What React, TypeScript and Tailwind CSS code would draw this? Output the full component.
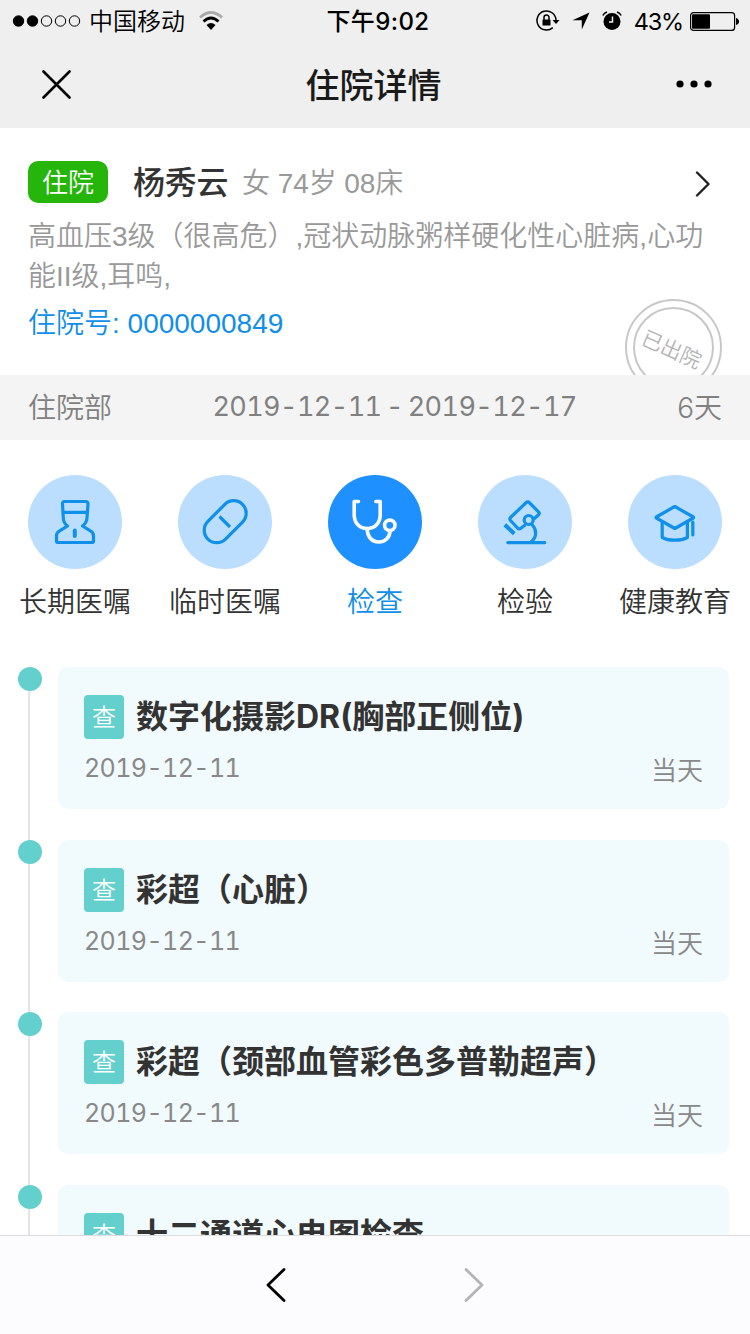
import React from 'react';

interface Exam {
  title: string;
  date?: string;
  day?: string;
}

interface Category {
  label: string;
  icon: React.ReactNode;
  active?: boolean;
}

const exams: Exam[] = [
  { title: '数字化摄影DR(胸部正侧位)', date: '2019-12-11', day: '当天' },
  { title: '彩超（心脏）', date: '2019-12-11', day: '当天' },
  { title: '彩超（颈部血管彩色多普勒超声）', date: '2019-12-11', day: '当天' },
  { title: '十二通道心电图检查' },
];

const iconProps = {
  viewBox: '0 0 94 94',
  className: 'w-full h-full',
  fill: 'none',
  stroke: 'currentColor',
  strokeWidth: 3.2,
  strokeLinecap: 'round' as const,
  strokeLinejoin: 'round' as const,
};

const DoctorIcon = () => (
  <svg {...iconProps}>
    <path d="M36.500 26.500h21q2.500 0 2.500 2.500l-1 14q-.4 5-4.500 8l7.500 4.700q3.500 1.800 3.500 5v5.300q0 1.500-1.500 1.500H30q-1.500 0-1.500-1.500v-5.300q0-3.200 3.500-5l7.500-4.700q-4-3-4.200-8L34.500 29q-.2-2.500 2-2.500z" />
    <path d="M35.500 37.300h23.500" />
    <path d="M46.800 55.500v5.500" strokeWidth={4} />
  </svg>
);

const PillIcon = () => (
  <svg {...iconProps}>
    <rect x="22.700" y="34.200" width="49" height="25" rx="12.500" transform="rotate(-45 47.200 46.700)" />
    <path d="M41.500 41.500l10.500 10.500" strokeLinecap="butt" />
  </svg>
);

const StethoscopeIcon = () => (
  <svg {...iconProps} strokeWidth={3.6}>
    <path d="M30.500 26.500h-4.300v13.500c0 8 5.500 13.500 13 13.500s13-5.500 13-13.500V26.500h-4.300" />
    <path d="M39.200 53.500c0 8 4.500 13.500 11.500 13.500 6.500 0 10.800-4.500 11.300-10.500" />
    <circle cx="61.800" cy="50.300" r="5.200" />
  </svg>
);

const MicroscopeIcon = () => (
  <svg {...iconProps}>
    <path d="M46.500 50.500L42.500 53.500Q41 54.500 39.500 53L32.500 45.500Q31.200 44 32.500 42.500L48.300 27.500Q49.700 26 51.200 27.500L60.500 36.800Q62 38.300 60.500 39.800L57 43" />
    <circle cx="50.700" cy="45" r="4.500" />
    <path d="M54 49.500c5.500 6 4.500 13-1 17.500M29.800 67.600h37" />
    <path d="M26.800 49.700l9.500 9" strokeWidth={4} strokeLinecap="butt" />
  </svg>
);

const CapIcon = () => (
  <svg {...iconProps}>
    <path d="M46.800 31.500l18.500 10.500q.6.500 0 1L46.800 53.500 28.300 43q-.6-.5 0-1z" />
    <path d="M34.200 48v14.500c6.500 3.600 18.700 3.600 25.200 0V48" />
    <path d="M64.800 47v13" />
  </svg>
);

const categories: Category[] = [
  { label: '长期医嘱', icon: <DoctorIcon /> },
  { label: '临时医嘱', icon: <PillIcon /> },
  { label: '检查', icon: <StethoscopeIcon />, active: true },
  { label: '检验', icon: <MicroscopeIcon /> },
  { label: '健康教育', icon: <CapIcon /> },
];

const StatusBar = () => (
  <div className="h-10 grid grid-cols-3 items-center text-black text-2xl leading-10 font-['Inter','Noto_Sans_CJK_SC',sans-serif]">
    <div className="flex items-center pl-3">
      <svg width="70" height="14" viewBox="0 0 70 14" stroke="#000" strokeWidth="1">
        <circle cx="6.500" cy="7" r="5.200" />
        <circle cx="20.500" cy="7" r="5.200" />
        <circle cx="34.500" cy="7" r="5.200" fill="none" />
        <circle cx="48.500" cy="7" r="5.200" fill="none" />
        <circle cx="62.500" cy="7" r="5.200" fill="none" />
      </svg>
      <span className="ml-[7px] pt-0.5 font-[350]">中国移动</span>
      <svg className="ml-3.5" width="24" height="20" viewBox="0 0 24 20" fill="none" strokeWidth="2.800">
        <path d="M1 6.500Q12-3.500 23 6.500" stroke="#aaa" />
        <path d="M4.500 10.500Q12 3.500 19.500 10.500" stroke="#000" />
        <path d="M7.500 14Q12 10.200 16.500 14L12 19z" fill="#000" />
      </svg>
    </div>
    <div className="text-center font-medium tracking-[0.4px] pl-1.5 pt-0.5">下午9:02</div>
    <div className="flex items-center justify-end pr-[11px]">
      <svg width="24" height="22" viewBox="0 0 24 22" fill="none" stroke="#000" strokeWidth="1.500">
        <path d="M16.800 17.600A9.500 9.500 0 1 1 20 10" />
        <path d="M16.500 10h7l-3.500 4z" fill="#000" stroke="none" />
        <rect x="6.500" y="9.500" width="8" height="6" rx="0.500" fill="#000" stroke="none" />
        <path d="M8 10V7.500a2.500 2.500 0 0 1 5 0V10" />
      </svg>
      <svg className="ml-3" width="18" height="18" viewBox="0 0 18 18">
        <path d="M17.500.5L9.800 17.500V8.300H.5z" />
      </svg>
      <svg className="ml-3" width="20" height="20" viewBox="0 0 20 20">
        <circle cx="10" cy="10.500" r="8.500" />
        <path d="M10.500 5.500v5.500H7" stroke="#efefef" strokeWidth="1.500" fill="none" />
        <path d="M.8 4.500Q2 2 5 1M19.200 4.500Q18 2 15 1" stroke="#000" strokeWidth="1.500" fill="none" />
      </svg>
      <span className="ml-3 pt-0.5 font-normal text-[23.500px] tracking-[-1.200px]">43%</span>
      <svg className="ml-[7px]" width="49" height="19" viewBox="0 0 49 19">
        <rect x="0.600" y="0.600" width="44" height="17.800" rx="3" fill="none" stroke="#000" strokeWidth="1.200" />
        <rect x="2" y="2.200" width="18" height="14.600" rx="1" />
        <path d="M46 6q3 1 3 3.500T46 13z" />
      </svg>
    </div>
  </div>
);

const NavBar = () => (
  <div className="h-[88px] flex items-center justify-between pl-[42px] pr-[37px]">
    <svg width="29" height="29" viewBox="0 0 29 29" stroke="#000" strokeWidth="2.600" strokeLinecap="round">
      <path d="M1.500 1.500l26 26M27.500 1.500l-26 26" />
    </svg>
    <h1 className="pt-[3px] text-[34px] leading-[50px] font-medium text-[#1a1a1a]">住院详情</h1>
    <svg width="37" height="8" viewBox="0 0 37 8">
      <circle cx="4" cy="4" r="3.600" />
      <circle cx="18" cy="4" r="3.600" />
      <circle cx="32" cy="4" r="3.600" />
    </svg>
  </div>
);

const PatientInfo = () => (
  <section className="relative h-[247px] overflow-hidden bg-white px-7 pt-[33px]">
    <div className="flex items-center h-[42px]">
      <span className="w-20 h-[42px] rounded-[10px] bg-[#26b50a] text-white text-[26px] leading-[45px] text-center">住院</span>
      <span className="ml-[25px] text-[32px] leading-[42px] pt-0.5 font-medium text-[#333] tracking-[-0.3px]">杨秀云</span>
      <span className="ml-3.5 text-[28px] leading-[42px] pt-[3px] text-[#999] tracking-[-0.1px]">女 74岁 08床</span>
      <svg className="ml-auto mr-[11px] mt-[3px]" width="17" height="26" viewBox="0 0 17 26" fill="none" stroke="#222" strokeWidth="2.400" strokeLinecap="round" strokeLinejoin="round">
        <path d="M3 1.500L14.500 13 3 24.500" />
      </svg>
    </div>
    <p className="mt-3.5 text-[28px] leading-10 text-[#999]">高血压3级（很高危）,冠状动脉粥样硬化性心脏病,心功能II级,耳鸣,</p>
    <p className="mt-[7px] text-[28px] leading-10 text-[#108ee9]">住院号: 0000000849</p>
    <div className="absolute left-[625px] top-[171px] w-[97px] h-[97px] rounded-full border-2 border-[#c8c8c8] p-1.5">
      <div className="w-full h-full rounded-full border-2 border-[#c8c8c8] flex items-center justify-center">
        <span className="rotate-[24deg] -translate-x-0.5 translate-y-0.5 whitespace-nowrap text-[21px] leading-none text-[#b4b4b4]">已出院</span>
      </div>
    </div>
  </section>
);

const StayBar = () => (
  <div className="h-[65px] flex items-center justify-between bg-[#f4f4f4] px-7 text-[28px] text-[#808080]">
    <span className="pt-[3px]">住院部</span>
    <span className="font-['Inter',sans-serif] text-[27px] font-normal tabular-nums tracking-[-0.600px] [word-spacing:-2px]">2019-12-11 - 2019-12-17</span>
    <span className="font-['Inter','Noto_Sans_CJK_SC',sans-serif]">6天</span>
  </div>
);

const CategoryTabs = () => (
  <nav className="grid grid-cols-5 pt-[35px] bg-white">
    {categories.map((item) => (
      <button key={item.label} className="flex flex-col items-center font-[350]">
        <span
          className={
            item.active
              ? 'w-[94px] h-[94px] rounded-full bg-[#1e90ff] text-white'
              : 'w-[94px] h-[94px] rounded-full bg-[#bbdefe] text-[#1090e8]'
          }
        >
          {item.icon}
        </span>
        <span className={item.active ? 'mt-3.5 text-[28px] leading-10 text-[#108ee9]' : 'mt-3.5 text-[28px] leading-10 text-[#333]'}>
          {item.label}
        </span>
      </button>
    ))}
  </nav>
);

const ExamCard: React.FC<{ exam: Exam }> = ({ exam }) => (
  <li className="flex h-[172.500px] shrink-0">
    <div className="w-[58px] shrink-0 flex flex-col items-start">
      <span className="ml-[18px] w-6 h-6 rounded-full bg-[#63d0cd]" />
      <span className="ml-7 w-0.5 flex-1 bg-[#e4e4e4]" />
    </div>
    <div className="w-[671px] h-[142px] rounded-[10px] bg-[#f1fafc] pl-[26px] pr-[26px] pt-7">
      <div className="flex items-center h-11">
        <span className="w-10 h-11 rounded bg-[#63d0cd] text-white text-2xl leading-[46px] text-center">查</span>
        <h3 className="ml-3 text-[32px] leading-[44px] font-bold text-[#333] font-['Inter','Noto_Sans_CJK_SC',sans-serif]">{exam.title}</h3>
      </div>
      {exam.date && (
        <div className="mt-[13px] flex justify-between text-[26px] leading-[38px] text-[#888]">
          <span className="font-['Inter',sans-serif] text-[25px] font-normal leading-8 tabular-nums tracking-[-0.600px]">{exam.date}</span>
          <span>{exam.day}</span>
        </div>
      )}
    </div>
  </li>
);

const Toolbar = () => (
  <footer className="h-[99px] shrink-0 flex justify-center items-center gap-[178px] border-t border-[#dcdcdc] bg-[#fcfcfe]">
    <svg width="20" height="34" viewBox="0 0 20 34" fill="none" stroke="#000" strokeWidth="2.800" strokeLinecap="round" strokeLinejoin="round">
      <path d="M18 1.500L2 17l16 15.500" />
    </svg>
    <svg width="20" height="34" viewBox="0 0 20 34" fill="none" stroke="#b4b4b4" strokeWidth="2.800" strokeLinecap="round" strokeLinejoin="round">
      <path d="M2 1.500L18 17 2 32.500" />
    </svg>
  </footer>
);

const App: React.FC = () => {
  return (
    <div className="w-[750px] h-[1334px] overflow-hidden flex flex-col bg-white font-['Liberation_Sans','Noto_Sans_CJK_SC',sans-serif] font-[350]">
      <header className="bg-[#efefef] shrink-0">
        <StatusBar />
        <NavBar />
      </header>
      <main className="flex-1 min-h-0 overflow-hidden">
        <PatientInfo />
        <StayBar />
        <CategoryTabs />
        <ul className="mt-11 flex flex-col">
          {exams.map((exam) => (
            <ExamCard key={exam.title} exam={exam} />
          ))}
        </ul>
      </main>
      <Toolbar />
    </div>
  );
};

export default App;
